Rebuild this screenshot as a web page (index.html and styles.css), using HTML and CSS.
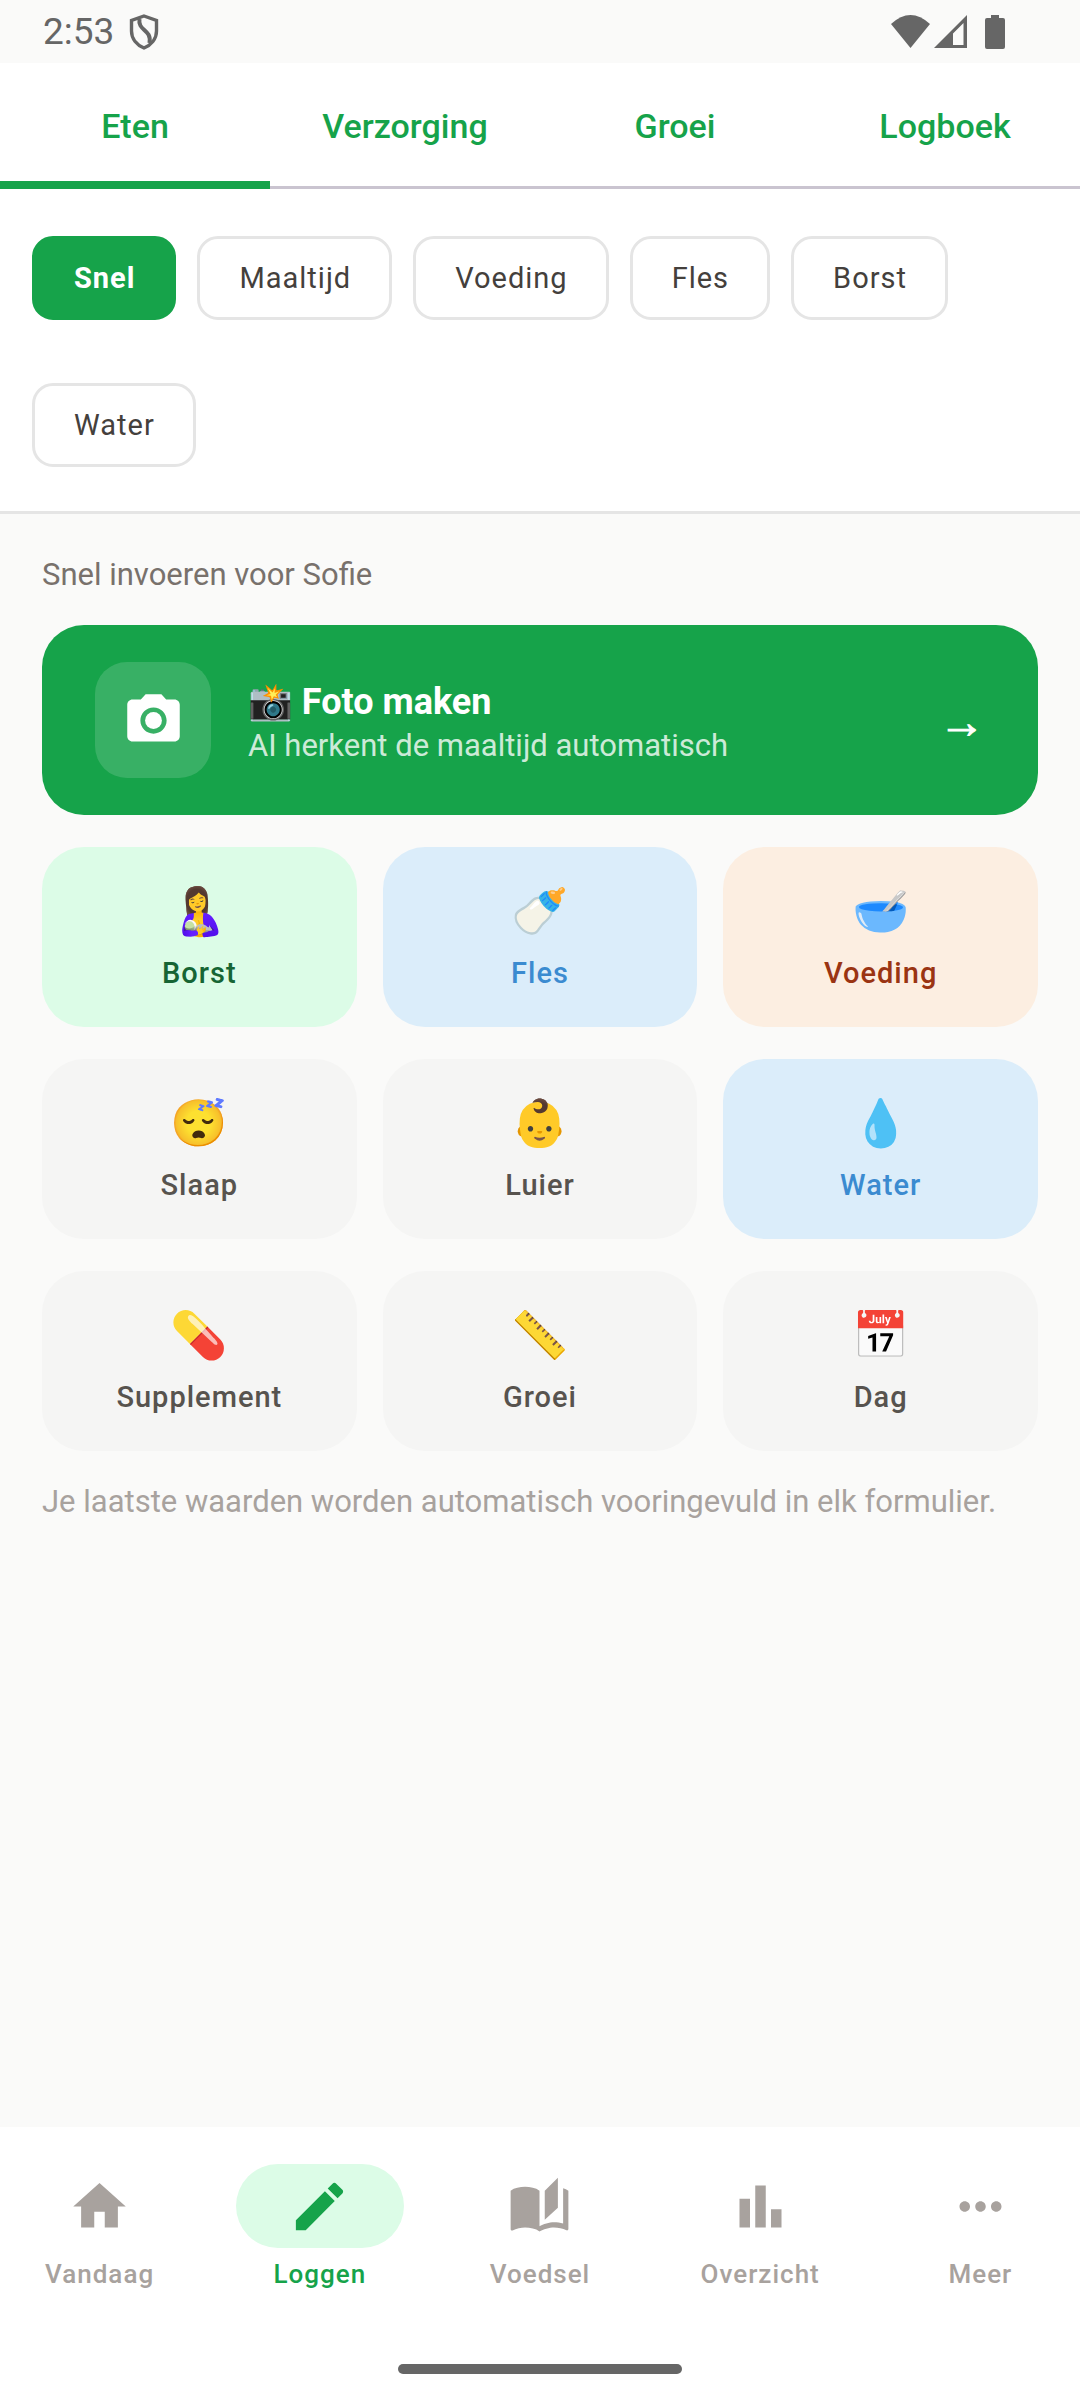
FILE: index.html
```html
<!DOCTYPE html>
<html lang="nl">
<head>
<meta charset="utf-8">
<meta name="viewport" content="width=device-width, initial-scale=1">
<title>Loggen</title>
<link rel="stylesheet" href="styles.css">
</head>
<body>
<div class="app">
  <header class="status">
    <span class="status-time">2:53</span>
    <svg class="status-shield" viewBox="0 0 30 36" aria-hidden="true"><path d="M15 2 L27.500 6.500 V17 C27.500 25 22 31 15 34 C8 31 2.500 25 2.500 17 V6.500 Z" fill="none" stroke="currentColor" stroke-width="3.400"/><path d="M10.500 5 C8.500 17 23 15 20.500 29" fill="none" stroke="currentColor" stroke-width="4"/></svg>
    <span class="status-icons">
      <svg width="39" height="33" viewBox="0 0 39 33" aria-hidden="true"><path d="M0 9 Q19.500 -9 39 9 L19.500 33 Z" fill="currentColor"/></svg>
      <svg width="33" height="33" viewBox="0 0 33 33" aria-hidden="true"><path d="M33 0 V33 H0 Z M29.500 8 L19 18.500 V30 H29.500 Z" fill="currentColor" fill-rule="evenodd"/></svg>
      <svg class="battery" width="20" height="34" viewBox="0 0 20 34" aria-hidden="true"><path d="M6 0 H14 V3 H18 Q20 3 20 5 V32 Q20 34 18 34 H2 Q0 34 0 32 V5 Q0 3 2 3 H6 Z" fill="currentColor"/></svg>
    </span>
  </header>

  <nav class="tabs" aria-label="Categorie">
    <button class="tab tab-active" type="button">Eten</button>
    <button class="tab" type="button">Verzorging</button>
    <button class="tab" type="button">Groei</button>
    <button class="tab" type="button">Logboek</button>
  </nav>

  <section class="chips" aria-label="Soort">
    <button class="chip chip-active" type="button">Snel</button>
    <button class="chip" type="button">Maaltijd</button>
    <button class="chip" type="button">Voeding</button>
    <button class="chip" type="button">Fles</button>
    <button class="chip" type="button">Borst</button>
    <button class="chip" type="button">Water</button>
  </section>

  <main class="content">
    <p class="intro">Snel invoeren voor Sofie</p>
    <button class="hero" type="button">
      <span class="hero-icon"><svg viewBox="0 0 24 24" aria-hidden="true"><circle cx="12" cy="12" r="3.200"/><path d="M9 2L7.170 4H4c-1.100 0-2 .9-2 2v12c0 1.100.9 2 2 2h16c1.100 0 2-.9 2-2V6c0-1.100-.9-2-2-2h-3.170L15 2H9zm3 15c-2.760 0-5-2.240-5-5s2.240-5 5-5 5 2.240 5 5-2.240 5-5 5z"/></svg></span>
      <span class="hero-text">
        <span class="hero-title">📸 Foto maken</span>
        <span class="hero-sub">AI herkent de maaltijd automatisch</span>
      </span>
      <span class="hero-arrow">→</span>
    </button>
    <div class="grid">
      <button class="tile tile-green" type="button"><span class="emoji">🤱</span>Borst</button>
      <button class="tile tile-blue" type="button"><span class="emoji">🍼</span>Fles</button>
      <button class="tile tile-orange" type="button"><span class="emoji">🥣</span>Voeding</button>
      <button class="tile" type="button"><span class="emoji">😴</span>Slaap</button>
      <button class="tile" type="button"><span class="emoji">👶</span>Luier</button>
      <button class="tile tile-blue" type="button"><span class="emoji">💧</span>Water</button>
      <button class="tile" type="button"><span class="emoji">💊</span>Supplement</button>
      <button class="tile" type="button"><span class="emoji">📏</span>Groei</button>
      <button class="tile" type="button"><span class="emoji">📅</span>Dag</button>
    </div>
    <p class="hint">Je laatste waarden worden automatisch vooringevuld in elk formulier.</p>
  </main>

  <footer class="bottom">
    <nav class="bottom-nav" aria-label="Hoofdmenu">
      <a class="nav-item" href="#vandaag"><span class="nav-pill"><svg viewBox="0 0 24 24" aria-hidden="true"><path d="M10 20v-6h4v6h5v-8h3L12 3 2 12h3v8z"/></svg></span>Vandaag</a>
      <a class="nav-item nav-active" href="#loggen" aria-current="page"><span class="nav-pill"><svg viewBox="0 0 24 24" aria-hidden="true"><path d="M3 17.250V21h3.750L17.810 9.940l-3.750-3.750L3 17.250zM20.710 7.040c.39-.39.39-1.020 0-1.410l-2.340-2.340c-.39-.39-1.020-.39-1.410 0l-1.830 1.830 3.750 3.750 1.830-1.830z"/></svg></span>Loggen</a>
      <a class="nav-item" href="#voedsel"><span class="nav-pill"><svg viewBox="0 0 24 24" aria-hidden="true"><path d="M19 1l-5 5v11l5-4.500V1zM1 6v14.650c0 .25.25.5.5.5.1 0 .15-.05.25-.05C3.100 20.450 5.050 20 6.500 20c1.950 0 4.050.4 5.500 1.500V6c-1.450-1.100-3.550-1.500-5.500-1.500S2.450 4.900 1 6zm22 13.500V6c-.6-.45-1.250-.75-2-1v13.500c-1.100-.35-2.300-.5-3.500-.5-1.700 0-4.150.65-5.500 1.500v2c1.350-.85 3.800-1.500 5.500-1.500 1.650 0 3.350.3 4.750 1.050.1.050.15.050.25.050.25 0 .5-.25.5-.5v-1.100z"/></svg></span>Voedsel</a>
      <a class="nav-item" href="#overzicht"><span class="nav-pill"><svg viewBox="0 0 24 24" aria-hidden="true"><path d="M4 9h4v11H4zM10 4h4v16h-4zM16 13h4v7h-4z"/></svg></span>Overzicht</a>
      <a class="nav-item" href="#meer"><span class="nav-pill"><svg viewBox="0 0 24 24" aria-hidden="true"><path d="M6 10c-1.100 0-2 .9-2 2s.9 2 2 2 2-.9 2-2-.9-2-2-2zm12 0c-1.100 0-2 .9-2 2s.9 2 2 2 2-.9 2-2-.9-2-2-2zm-6 0c-1.100 0-2 .9-2 2s.9 2 2 2 2-.9 2-2-.9-2-2-2z"/></svg></span>Meer</a>
    </nav>
    <div class="gesture"></div>
  </footer>
</div>
</body>
</html>
```
FILE: styles.css
```css
* { box-sizing: border-box; }

body {
  margin: 0;
  background: #fafaf9;
  font-family: Roboto, "Noto Color Emoji", sans-serif;
  color: #44403c;
}

button {
  border: 0;
  padding: 0;
  background: none;
  font: inherit;
  color: inherit;
}

p { margin: 0; }

.app {
  display: flex;
  flex-direction: column;
  min-height: 100vh;
}

.status {
  display: flex;
  align-items: center;
  height: 63px;
  padding: 0 75px 0 43px;
  color: #666;
}
.status-time { font-size: 37px; line-height: 44px; }
.status-shield { width: 30px; height: 36px; margin-left: 15px; }
.status-icons { display: flex; gap: 4px; margin-left: auto; }
.battery { margin-left: 14px; }

.tabs {
  display: grid;
  grid-template-columns: repeat(4, 1fr);
  background: #fff;
  box-shadow: inset 0 -3px #cac4d0;
}
.tab {
  height: 126px;
  font-size: 34px;
  font-weight: 500;
  color: #16a34a;
}
.tab-active { box-shadow: inset 0 -8px #16a34a; }

.chips {
  display: flex;
  flex-wrap: wrap;
  gap: 63px 21px;
  padding: 47px 32px 44px;
  background: #fff;
  border-bottom: 3px solid #e5e5e5;
}
.chip {
  height: 84px;
  padding: 0 38px 0 39px;
  border: 3px solid #e5e5e5;
  border-radius: 21px;
  font-size: 29px;
  letter-spacing: 1px;
}
.chip-active {
  background: #16a34a;
  border-color: #16a34a;
  color: #fff;
  font-weight: 700;
}

.content {
  display: flex;
  flex-direction: column;
  flex: 1;
  padding: 41px 42px;
}
.intro {
  font-size: 31px;
  line-height: 40px;
  color: #78716c;
}
.hero {
  display: flex;
  align-items: center;
  gap: 37px;
  margin: 30px 0 32px;
  padding: 37px 53px;
  border-radius: 42px;
  background: #16a34a;
  color: #fff;
  text-align: left;
}
.hero-icon {
  display: grid;
  place-items: center;
  width: 116px;
  height: 116px;
  border-radius: 32px;
  background: rgba(255, 255, 255, 0.15);
}
.hero-icon svg { width: 63px; height: 63px; fill: #fff; }
.hero-text { display: flex; flex-direction: column; flex: 1; padding-top: 8px; }
.hero-title { font-size: 36px; line-height: 44px; font-weight: 700; }
.hero-sub { font-size: 31px; line-height: 44px; color: rgba(255, 255, 255, 0.8); }
.hero-arrow {
  font-family: "Noto Sans", sans-serif;
  font-size: 46px;
  line-height: 44px;
  font-weight: 700;
  -webkit-text-stroke: 1px #fff;
}

.grid {
  display: grid;
  grid-template-columns: repeat(3, 1fr);
  gap: 32px 26px;
}
.tile {
  display: flex;
  flex-direction: column;
  align-items: center;
  gap: 11px;
  padding: 36px 0 32px;
  border-radius: 42px;
  background: #f5f5f4;
  color: #57534e;
  font-size: 29px;
  line-height: 44px;
  font-weight: 500;
  letter-spacing: 1px;
}
.emoji { font-size: 46px; line-height: 57px; letter-spacing: 0; }
.tile-green { background: #dcfce7; color: #166534; }
.tile-blue { background: #dbedfa; color: #3b8bd0; }
.tile-orange { background: #fceee1; color: #9a3412; }

.hint {
  margin-top: 31px;
  font-size: 31px;
  line-height: 40px;
  color: #a8a29e;
}

.bottom { background: #fff; padding: 37px 0 26px; }
.bottom-nav {
  display: grid;
  grid-template-columns: repeat(5, 1fr);
  gap: 21px;
}
.nav-item {
  display: flex;
  flex-direction: column;
  align-items: center;
  gap: 10px;
  font-size: 26px;
  line-height: 32px;
  font-weight: 500;
  letter-spacing: 1px;
  color: #a8a29e;
  text-decoration: none;
}
.nav-pill {
  display: grid;
  place-items: center;
  width: 168px;
  height: 84px;
  border-radius: 42px;
}
.nav-pill svg { width: 63px; height: 63px; fill: currentColor; }
.nav-active { color: #16a34a; }
.nav-active .nav-pill { background: #dcfce7; }
.gesture {
  width: 284px;
  height: 10px;
  margin: 74px auto 0;
  border-radius: 5px;
  background: #666;
}
```
